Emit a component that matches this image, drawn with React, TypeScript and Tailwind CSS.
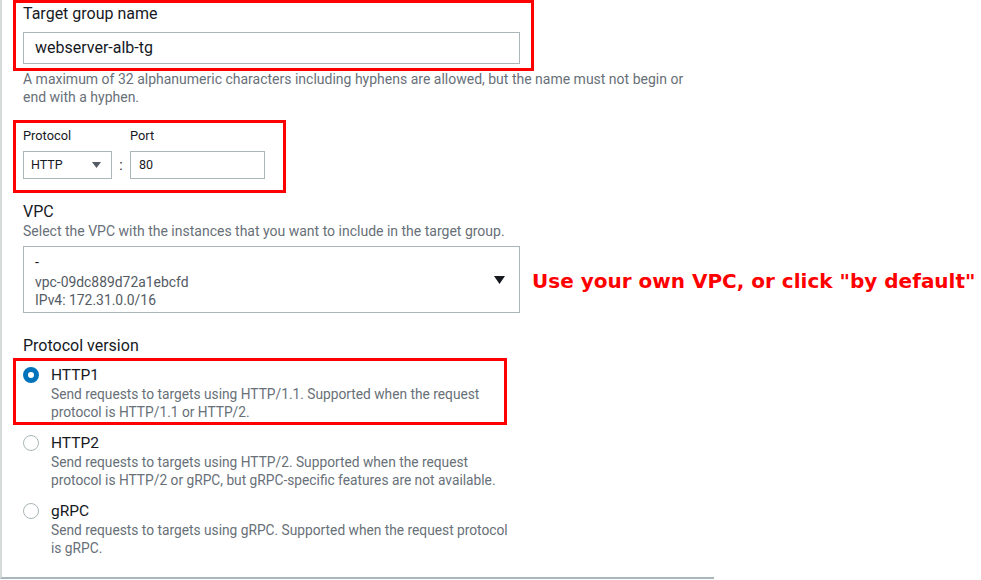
import React from 'react';

const font = { fontFamily: 'Roboto, "Noto Sans", sans-serif' };

interface RadioOptionProps {
  label: string;
  description: React.ReactNode;
  selected?: boolean;
}

const RadioOption: React.FC<RadioOptionProps> = ({ label, description, selected }) => (
  <div className="flex">
    <div className="w-[28px] pt-[3px] shrink-0">
      {selected ? (
        <div className="w-[16px] h-[16px] rounded-full border-[5px] border-[#0073bb] bg-white" />
      ) : (
        <div className="w-[16px] h-[16px] rounded-full border-[1.5px] border-[#aab7b8] bg-white" />
      )}
    </div>
    <div>
      <div className="text-[15.5px] leading-[22px] text-[#16191f]">{label}</div>
      <div className="text-[13.75px] leading-[17.5px] text-[#687078] whitespace-nowrap">{description}</div>
    </div>
  </div>
);

const App: React.FC = () => {
  return (
    <div className="w-[981px] h-[580px] bg-white overflow-hidden" style={font}>
      <div className="w-[714px] h-[579px] border-l-2 border-b-2 border-l-[#d5dbdb] border-b-[#aab7b8] pl-[11px]">
        {/* Target group name */}
        <div className="w-[521px] h-[71px] border-[3px] border-[#ff0000] pl-[7px] pt-[1px]">
          <div className="text-[16px] leading-[20px] text-[#16191f]">Target group name</div>
          <div className="mt-2 w-[497px] h-8 border border-[#aab7b8] flex items-center px-[11px] text-[16px] text-[#16191f]">
            webserver-alb-tg
          </div>
        </div>
        <p className="-mt-[1px] pl-[10px] text-[14px] leading-[18px] text-[#687078]">
          A maximum of 32 alphanumeric characters including hyphens are allowed, but the name must not begin or
          <br />
          end with a hyphen.
        </p>

        {/* Protocol / Port */}
        <div className="mt-[14px] w-[273px] h-[73px] border-[3px] border-[#ff0000] pl-[7px] pt-[5px] flex">
          <div className="flex flex-col">
            <div className="text-[12.8px] leading-[16px] text-[#16191f]">Protocol</div>
            <div className="mt-[7px] w-[89px] h-7 border border-[#aab7b8] flex items-center justify-between pl-[7px] pr-[10px] text-[12.5px] text-[#16191f]">
              <span>HTTP</span>
              <svg width="9" height="6" viewBox="0 0 9 6">
                <path d="M0 0h9L4.5 6z" fill="#545b64" />
              </svg>
            </div>
          </div>
          <div className="w-[18px] pt-[23px] h-[51px] flex items-center justify-center text-[14px] text-[#16191f]">:</div>
          <div className="flex flex-col">
            <div className="text-[12.8px] leading-[16px] text-[#16191f]">Port</div>
            <div className="mt-[7px] w-[135px] h-7 border border-[#aab7b8] flex items-center pl-[8px] text-[12.5px] text-[#16191f]">
              80
            </div>
          </div>
        </div>

        {/* VPC */}
        <div className="pl-[10px]">
          <div className="mt-[9px] text-[16px] leading-[20px] text-[#16191f]">VPC</div>
          <div className="text-[14px] leading-[18px] text-[#687078]">
            Select the VPC with the instances that you want to include in the target group.
          </div>
          <div className="mt-[6px] flex items-center">
            <div className="w-[497px] h-[67px] shrink-0 border border-[#aab7b8] flex items-center justify-between pl-[11px] pr-[14px]">
              <div className="pt-[2px]">
                <div className="text-[14px] leading-[20px] text-[#16191f]">-</div>
                <div className="mt-[2px] text-[13.9px] leading-[17.5px] text-[#545b64]">vpc-09dc889d72a1ebcfd</div>
                <div className="text-[13.9px] leading-[17.5px] text-[#545b64]">IPv4: 172.31.0.0/16</div>
              </div>
              <svg width="11" height="8" viewBox="0 0 11 8">
                <path d="M0 0h11L5.5 8z" fill="#16191f" />
              </svg>
            </div>
            <div
              className="ml-[12px] pt-[2px] text-[20px] font-bold text-[#ff0000] whitespace-nowrap"
              style={{ fontFamily: '"DejaVu Sans", sans-serif' }}
            >
              Use your own VPC, or click "by default"
            </div>
          </div>

          <div className="mt-[23px] text-[16px] leading-[20px] text-[#16191f]">Protocol version</div>
        </div>

        {/* Protocol version */}
        <div className="mt-[2px] w-[494px] h-[67px] border-[3px] border-[#ff0000] pl-[7px] pt-[3px]">
          <RadioOption
            selected
            label="HTTP1"
            description={<>Send requests to targets using HTTP/1.1. Supported when the request<br />protocol is HTTP/1.1 or HTTP/2.</>}
          />
        </div>
        <div className="pl-[10px] mt-[7px]">
          <RadioOption
            label="HTTP2"
            description={<>Send requests to targets using HTTP/2. Supported when the request<br />protocol is HTTP/2 or gRPC, but gRPC-specific features are not available.</>}
          />
          <div className="mt-[11px]">
            <RadioOption
              label="gRPC"
              description={<>Send requests to targets using gRPC. Supported when the request protocol<br />is gRPC.</>}
            />
          </div>
        </div>
      </div>
    </div>
  );
};

export default App;
